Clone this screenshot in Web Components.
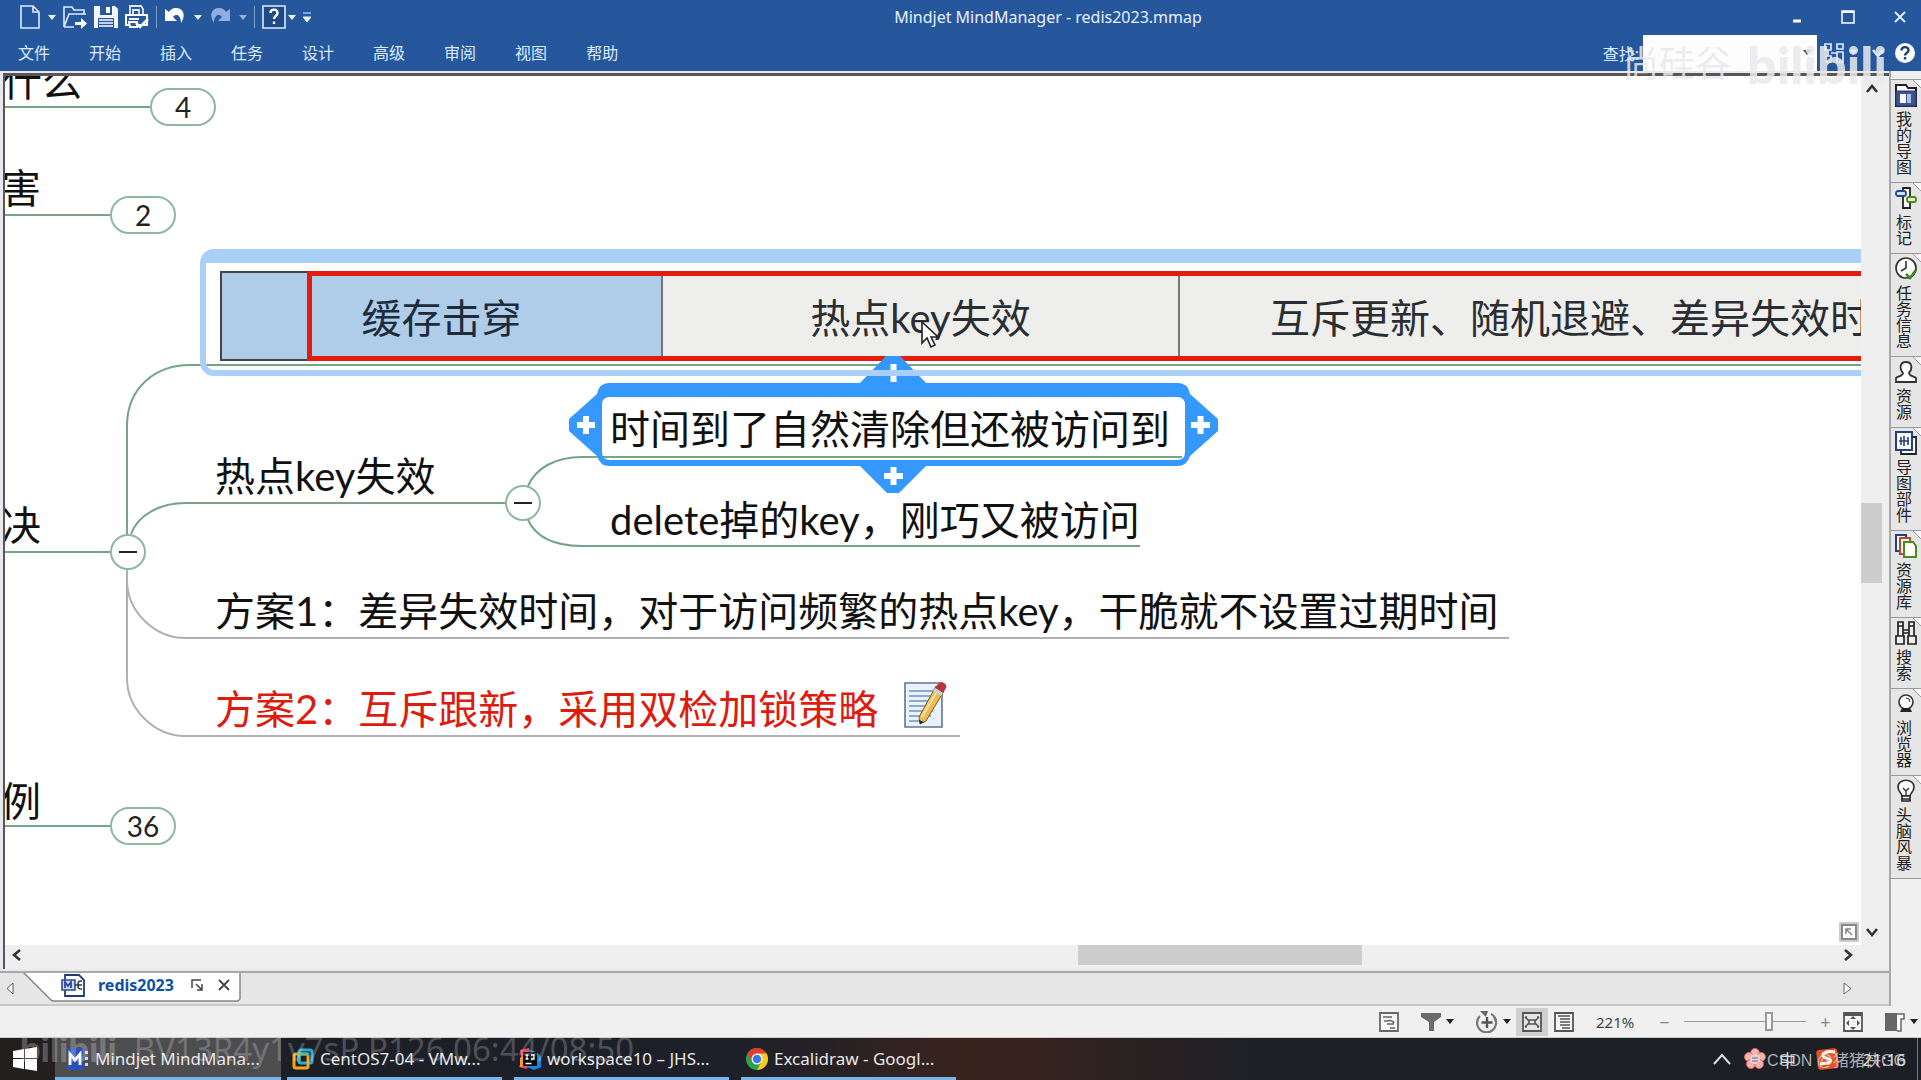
<!DOCTYPE html>
<html lang="zh-CN">
<head>
<meta charset="utf-8">
<title>Mindjet MindManager - redis2023.mmap</title>
<style>
  html, body { margin: 0; height: 100%; overflow: hidden; }
  body { font-family: "Noto Sans", "Noto Sans CJK SC", sans-serif; font-size: 16px; background: #f0f0f0; }
</style>
</head>
<body>
<mind-app></mind-app>
<script>
const BASE = `*{box-sizing:border-box} button,input{font:inherit;color:inherit}
button{appearance:none;border:0;background:none;padding:0;margin:0;display:flex;align-items:center;justify-content:center}`;

function define(name, css, html) {
  const t = document.createElement('template');
  t.innerHTML = `<style>${BASE}${css}</style>${html}`;
  customElements.define(name, class extends HTMLElement {
    constructor() {
      super();
      this.attachShadow({ mode: 'open' }).append(t.content.cloneNode(true));
    }
  });
}

/* name: [width, height, markup] */
const ICONS = {
  file: [20, 24, '<path d="M1 1h12l6 6v16H1z M13 1v6h6" fill="none" stroke="#dcecff" stroke-width="1.6"/>'],
  open: [24, 24, '<path d="M1 22V2h8l2 3h10v4M1 22L6 9h17M1 22h10" fill="none" stroke="#dcecff" stroke-width="1.6"/><path d="M12 17h6v-4l6 5.500l-6 5.500v-4h-6z" fill="#fff"/>'],
  save: [24, 24, '<path d="M0 1h21l3 3v19H0z" fill="#f2f7ff"/><path d="M6 1h12v9H6z" fill="#26579c"/><path d="M12 2h4v6h-4z" fill="#fff"/><path d="M4 13h16v10H4z" fill="#26579c"/><path d="M5 15h14M5 18h14M5 21h14" stroke="#fff" stroke-width="1.600"/>'],
  print: [24, 24, '<path d="M5 10V1h11l2 3v6M8 9V5h6v4" fill="none" stroke="#dcecff" stroke-width="1.800"/><path d="M1 10h21v10H1z" fill="none" stroke="#fff" stroke-width="2"/><path d="M4 14h10M4 17h8v5H5z" stroke="#fff" stroke-width="2" fill="#26579c"/><path d="M11 18l4 4l8-8" stroke="#fff" stroke-width="2.600" fill="none"/>'],
  undo: [22, 20, '<path d="M1 2v12h12L9 10c3-4 8-2 8 6c6-9 1-16-6-15c-3 .5-5 2-6 4z" fill="#fff"/>'],
  redo: [22, 20, '<path d="M21 2v12H9l4-4c-3-4-8-2-8 6c-6-9-1-16 6-15c3 .5 5 2 6 4z" fill="#8fb0df"/>'],
  helpbox: [24, 24, '<path d="M1 1h22v22H1z" fill="#1f4a88" stroke="#dcecff" stroke-width="1.600"/><path d="M8.500 8c0-4.500 7-4.500 7 0c0 3-3.500 3-3.500 6M12 16.500v2.500" fill="none" stroke="#fff" stroke-width="2.400"/>'],
  down: [8, 5, '<path d="M0 0h8L4 5z" fill="currentColor"/>'],
  custom: [8, 11, '<path d="M0 1h8M0 5h8L4 10z" fill="currentColor" stroke="currentColor"/>'],
  min: [10, 14, '<path d="M1 11h8" stroke="#fff" stroke-width="3"/>'],
  max: [14, 14, '<path d="M1 1h12v12H1z" fill="none" stroke="#fff" stroke-width="1.500"/><path d="M1 2h12" stroke="#fff" stroke-width="2"/>'],
  close: [12, 12, '<path d="M1 1l10 10M11 1L1 11" stroke="currentColor" stroke-width="1.800"/>'],
  layout: [22, 20, '<path d="M2 1h6v6H2zM14 1h6v5h-6zM14 9h6v10h-6zM2 13h6v6H2M8 10h6M5 7v6" fill="none" stroke="#dcecff" stroke-width="1.700"/>'],
  chevdown: [14, 10, '<path d="M2 2l5 6l5-6" fill="none" stroke="currentColor" stroke-width="2.600"/>'],
  chevup: [14, 10, '<path d="M2 8l5-6l5 6" fill="none" stroke="currentColor" stroke-width="2.600"/>'],
  chevleft: [10, 12, '<path d="M8 1L2 6l6 5" fill="none" stroke="currentColor" stroke-width="2.600"/>'],
  chevright: [10, 12, '<path d="M2 1l6 5l-6 5" fill="none" stroke="currentColor" stroke-width="2.600"/>'],
  help: [20, 20, '<circle cx="10" cy="10" r="10" fill="#fff"/><path d="M6.500 7.500c0-4.500 7-4.500 7 0c0 2.500-3.500 2.500-3.500 5M10 14v2.500" fill="none" stroke="#1d3f73" stroke-width="2.400"/>'],
  mymaps: [22, 24, '<path d="M1 23V2h10l2 3h8v18z" fill="#fff" stroke="#222" stroke-width="2"/><path d="M1 8h20v15H1z" fill="#3a5296" stroke="#26366d"/><path d="M5 11h6v9H5z" fill="#fff"/><path d="M12 11h4v9h-4z" fill="#b9bfd8"/>'],
  marker: [22, 24, '<path d="M8 2h7v20H8z" fill="#fff" stroke="#222" stroke-width="1.800"/><rect x="1" y="5" width="10" height="5" rx="2" fill="#cfe0ff" stroke="#224a94" stroke-width="1.800"/><rect x="12" y="11" width="9" height="5" rx="2" fill="#e3f3cf" stroke="#4c8a14" stroke-width="1.800"/>'],
  task: [22, 24, '<circle cx="11" cy="11" r="10" fill="#fff" stroke="#333" stroke-width="1.700"/><path d="M11 4v7l-5 3" fill="none" stroke="#333" stroke-width="1.600"/><path d="M11 17l4 4l6-8" fill="none" stroke="#3c8a14" stroke-width="2.600"/>'],
  person: [22, 24, '<path d="M1 22v-4c3-2 7-2 7-5C4 8 5 2 11 2s7 6 3 11c0 3 4 3 7 5v4z" fill="#fff" stroke="#333" stroke-width="1.800"/>'],
  parts: [22, 24, '<path d="M6 6h15v17H6z" fill="#fff" stroke="#222" stroke-width="1.800"/><path d="M1 1h16v18H1z" fill="#fff" stroke="#243f87" stroke-width="2"/><path d="M4 10h10M6 6v8M9 5v10M13 6v8" stroke="#243f87" stroke-width="1.600"/>'],
  library: [22, 24, '<path d="M1 1h10v16H1z" fill="#fff" stroke="#273c84" stroke-width="2"/><path d="M5 4h10v16H5z" fill="#fff" stroke="#c4461a" stroke-width="2"/><path d="M9 8h9l3 4v11H9z" fill="#fff" stroke="#4a8a1c" stroke-width="2"/>'],
  search: [22, 24, '<path d="M3 1h5v4H3zM14 1h5v4h-5zM3 5h5v10H3zM14 5h5v10h-5zM1 15h8v8H1zM13 15h8v8h-8zM8 9h6M8 12h6" fill="#eee" stroke="#222" stroke-width="1.700"/>'],
  browser: [22, 24, '<circle cx="11" cy="10" r="7" fill="#fff" stroke="#333" stroke-width="1.600"/><path d="M11 6a4 4 0 0 1 4 4" fill="none" stroke="#333"/><path d="M7 16h8l2 4H5z" fill="#222"/>'],
  bulb: [22, 24, '<path d="M7 17c0-3-4-4-4-9c0-9 16-9 16 0c0 5-4 6-4 9z" fill="#fff" stroke="#333" stroke-width="1.700"/><path d="M8 9l3 3l3-3M11 12v5" fill="none" stroke="#333" stroke-width="1.400"/><path d="M7 17h8v5H7zM7 20h8" fill="#fff" stroke="#222" stroke-width="1.600"/>'],
  fitcorner: [22, 22, '<path d="M1 1h20v20H1z" fill="#ccc"/><path d="M4 4h14v14H4z" fill="#fff" stroke="#888" stroke-width="2"/><path d="M14 14L8 8M8 13V8h5" stroke="#888" stroke-width="1.600" fill="none"/>'],
  mmdoc: [24, 24, '<path d="M4 2h14l5 5v16H4z" fill="#fff" stroke="#1f3b7a" stroke-width="1.800"/><path d="M1 7h13v10H1z" fill="#cdd8f2" stroke="#2c4a95" stroke-width="1.600"/><path d="M4 15V9l3 4l3-4v6" fill="none" stroke="#2c4a95" stroke-width="1.800"/><path d="M14 12h3M21 8c-4 0-4 1-4 4s0 4 4 4M17 12h4" fill="none" stroke="#333" stroke-width="1.600"/>'],
  pop: [12, 12, '<path d="M1 9V1h9M5 5l6 6M11 5v6H6" fill="none" stroke="#444" stroke-width="1.500"/>'],
  triLeft: [8, 13, '<path d="M7 1v11L1 6.500z" fill="#fff" stroke="#555"/>'],
  triRight: [9, 13, '<path d="M1 1v11l7-5.500z" fill="#fff" stroke="#666"/>'],
  outline: [20, 20, '<path d="M1 1h18v18H1z" fill="#f6f6f6" stroke="#666" stroke-width="1.800"/><path d="M4 5h9M5 9h3c3-1 6 0 7 2M8 12h7M11 16h5" fill="none" stroke="#666" stroke-width="1.700"/>'],
  filter: [20, 20, '<path d="M0 1h20v4l-7 5v9H8v-9L0 5z" fill="#6b6b6b"/>'],
  target: [22, 22, '<path d="M4 5a9.500 9.500 0 1 0 14 1" fill="none" stroke="#777" stroke-width="2.200"/><path d="M4 0h8l-2 6z" fill="#666"/><path d="M15 3a9 9 0 0 1 5 8" fill="none" stroke="#777" stroke-width="2"/><path d="M11 6v11M5.500 11.500h11" stroke="#555" stroke-width="2.400"/>'],
  mapview: [20, 20, '<path d="M1 1h18v18H1z" fill="#e4e4e4" stroke="#555" stroke-width="1.800"/><path d="M7 8h6v4H7zM3 5l4 4M3 15l4-4M17 5l-4 4M17 15l-4-4M3 5h2M3 15h2M15 5h2M15 15h2" fill="none" stroke="#555" stroke-width="1.600"/>'],
  listview: [20, 20, '<path d="M1 1h18v18H1z" fill="#f6f6f6" stroke="#555" stroke-width="1.800"/><path d="M4 4h12M6 7h10M6 10h10M6 13h10M8 16h8" stroke="#555" stroke-width="1.500"/>'],
  fit: [20, 20, '<path d="M1 1h18v18H1z" fill="#f6f6f6" stroke="#555" stroke-width="1.800"/><path d="M1 3h18" stroke="#555" stroke-width="2"/><path d="M10 4l3 3H7zM10 18l3-3H7zM3 11l3-3v6zM17 11l-3-3v6z" fill="#555"/>'],
  panel: [20, 20, '<path d="M0 1h12v18H0z" fill="#666"/><path d="M12 2h7v5h-3v12h-4" fill="#fff" stroke="#666" stroke-width="1.500"/>'],
  windows: [24, 24, '<path d="M0 4l11-2v9H0zM12 2l12-2v11H12zM0 12h11v10L0 20zM12 12h12v12l-12-2z" fill="#fff"/>'],
  mindjet: [22, 22, '<path d="M0 0h17v22H0z" fill="#2b50b8"/><path d="M3 17V6l5 6l5-6v11" fill="none" stroke="#fff" stroke-width="2.800"/><path d="M18 3h3v3h-3zM18 9h3v3h-3zM18 15h3v3h-3z" fill="#c9d8ff"/>'],
  vmware: [22, 22, '<rect x="7" y="2" width="13" height="13" rx="2" fill="none" stroke="#2ba9d6" stroke-width="3"/><rect x="2" y="6" width="14" height="14" rx="2" fill="none" stroke="#f3a71f" stroke-width="3"/><path d="M7 14V6h10" fill="none" stroke="#56b8a0" stroke-width="3"/>'],
  idea: [22, 22, '<path d="M1 2l9-2l3 8l-5 13l-8-2l3-7z" fill="#f0475f"/><path d="M10 2l8 2l4 5v10l-7 3l-7-3z" fill="#1689e6"/><path d="M1 10l4-4l2 12l-6 1z" fill="#f8973a"/><path d="M4 4h14v14H4z" fill="#0a0a0a"/><path d="M6.500 7h3M8 7v4M6.500 11h3M12 7h3v4h-3M6.500 15.500h6" stroke="#fff" stroke-width="1.300" fill="none"/>'],
  chrome: [22, 22, '<circle cx="11" cy="11" r="11" fill="#2da24c"/><path d="M1.500 5.500A11 11 0 0 1 20.500 5.500H11L6 14z" fill="#e33b2e"/><path d="M20.500 5.500A11 11 0 0 1 11 22L16 13L11 5.500z" fill="#fcc91f"/><circle cx="11" cy="11" r="5.500" fill="#fff"/><circle cx="11" cy="11" r="4.300" fill="#3b78e7"/>'],
  trayup: [20, 12, '<path d="M2 11l8-9l8 9" fill="none" stroke="#ddd" stroke-width="2"/>'],
  flower: [22, 22, '<g fill="#f4b3ae" stroke="#d9605c"><circle cx="11" cy="5" r="4.500"/><circle cx="5" cy="9" r="4.500"/><circle cx="17" cy="9" r="4.500"/><circle cx="7" cy="16" r="4.500"/><circle cx="15" cy="16" r="4.500"/></g><circle cx="11" cy="11" r="5" fill="#f7cfc9"/><path d="M8 10h6M8 13h6" stroke="#7b8fc4" stroke-width="1.500"/>'],
  sogou: [24, 24, '<rect x="1" y="2" width="21" height="20" rx="3" fill="#e6541a" transform="rotate(-6 12 12)"/><path d="M19 5C8 3 3 9 10 11s7 5-6 6" fill="none" stroke="#fff" stroke-width="3"/>'],
  note: [44, 48, '<path d="M1 2h37v44H1z" fill="#e9f2fb" stroke="#5f7691" stroke-width="1.600"/><path d="M5 10h29M5 15h29M5 20h27M5 25h25M5 30h24M5 35h22M5 40h14" stroke="#6e93bd" stroke-width="1.600"/><path d="M32 5l8 5l-18 30l-6 3l-1-7z" fill="#e8bd58" stroke="#7d6023"/><path d="M35 7L18 36" stroke="#f8e3a2" stroke-width="2"/><path d="M34 3c3-4 10 0 8 4l-3 5l-8-5z" fill="#b7343c"/><path d="M31 7l8 5l-2 3l-8-5z" fill="#cfcfcf"/><path d="M15 39l1 4l4-2z" fill="#222"/>'],
  cursor: [20, 28, '<path d="M1 1v21l5-5l4 9l4-2l-4-8h7z" fill="#fff" stroke="#222" stroke-width="1.600"/>']
};
customElements.define('ui-icon', class extends HTMLElement {
  constructor() { super(); this.attachShadow({ mode: 'open' }); }
  connectedCallback() {
    const [w, h, body] = ICONS[this.getAttribute('name')];
    this.shadowRoot.innerHTML = `<style>:host{display:block;flex:none}svg{display:block}</style>
      <svg width="${w}" height="${h}" viewBox="0 0 ${w} ${h}" aria-hidden="true">${body}</svg>`;
  }
});

define('title-bar', `
  :host{display:flex;height:34px;align-items:center;color:#e6f0ff;font-size:16px}
  .quick{display:flex;align-items:center;gap:7px;padding-left:20px;width:330px}
  .pair{display:flex;align-items:center;gap:8px}
  .tight{gap:2px}
  i{width:1px;height:22px;background:#7f9fcb}
  .dim{color:#8fb0df}
  .name{flex:1;text-align:center}
  .win{display:flex;width:155px;padding-left:26px;gap:39px;align-items:center}`,
  `<div class="quick">
    <div class="pair"><button aria-label="新建"><ui-icon name="file"></ui-icon></button><ui-icon name="down"></ui-icon></div>
    <button aria-label="打开"><ui-icon name="open"></ui-icon></button>
    <button aria-label="保存"><ui-icon name="save"></ui-icon></button>
    <button aria-label="打印"><ui-icon name="print"></ui-icon></button><i></i>
    <div class="pair"><button aria-label="撤销"><ui-icon name="undo"></ui-icon></button><ui-icon name="down"></ui-icon></div>
    <div class="pair dim"><button aria-label="重做"><ui-icon name="redo"></ui-icon></button><ui-icon name="down"></ui-icon></div><i></i>
    <div class="pair tight"><button aria-label="帮助"><ui-icon name="helpbox"></ui-icon></button><ui-icon name="down"></ui-icon></div>
    <ui-icon name="custom"></ui-icon>
  </div>
  <div class="name">Mindjet MindManager - redis2023.mmap</div>
  <div class="win"><button aria-label="最小化"><ui-icon name="min"></ui-icon></button>
    <button aria-label="最大化"><ui-icon name="max"></ui-icon></button>
    <button aria-label="关闭"><ui-icon name="close"></ui-icon></button></div>`);

define('ribbon-bar', `
  :host{display:flex;height:37px;align-items:center;color:#dcebff}
  nav{display:flex;gap:39px;padding-left:18px;flex:1}
  .find{display:flex;align-items:center;height:36px}
  label{padding-right:4px}
  .box{display:flex;align-items:center;width:174px;height:36px;background:#fdfdfd;color:#444;padding-right:6px}
  input{flex:1;min-width:0;height:100%;border:0;background:none;outline:0}
  .more{display:flex;align-items:center;gap:4px;padding:0 6px}
  .more ui-icon:nth-of-type(2){margin-right:10px}
  .more button{padding-left:6px}`,
  `<nav><slot></slot></nav>
  <div class="find"><label for="q">查找:</label>
    <div class="box"><input id="q" type="text"><ui-icon name="down"></ui-icon></div></div>
  <div class="more"><ui-icon name="layout"></ui-icon><ui-icon name="down"></ui-icon><ui-icon name="chevdown"></ui-icon>
    <button aria-label="帮助"><ui-icon name="help"></ui-icon></button></div>`);

define('menu-item', `:host{display:block} button{line-height:24px}`, `<button><slot></slot></button>`);

define('map-topic', `
  :host{display:block;position:absolute;white-space:nowrap;font:40px/48px Lato,"Noto Sans CJK SC",sans-serif;color:#111}
  :host([red]){color:#dd1c10}`, `<slot></slot>`);

define('map-count', `
  :host{display:block;position:absolute}
  button{width:66px;height:38px;border:2px solid #8db79f;border-radius:19px;background:#fff;color:#222;font:28px/32px Lato,sans-serif}`,
  `<button><slot></slot></button>`);

define('map-fold', `
  :host{display:block;position:absolute}
  button{width:36px;height:36px;border:2px solid #8db79f;border-radius:50%;background:#fff}
  i{width:18px;height:2px;background:#222}`,
  `<button aria-label="折叠"><i></i></button>`);

define('picture-table', `
  :host{display:block;position:absolute}
  table{border-collapse:collapse;table-layout:fixed;width:1740px;height:90px;font:40px/48px Lato,"Noto Sans CJK SC",sans-serif;color:#2a2e33}
  td{border:2px solid #777;padding:4px 0 0;text-align:center;background:#eeeeec;white-space:nowrap}
  td:first-child{background:#afcde9;border-color:#444 #777 #444 #444;color:#1d2c3a}
  td:last-child{text-align:left;padding-left:90px}
  .mark{position:absolute;left:87px;top:0;width:1760px;height:90px;border:5px solid #e51c0c}`,
  `<table><colgroup><col style="width:441px"><col style="width:517px"><col></colgroup>
   <tr><td>缓存击穿</td><td>热点key失效</td><td>互斥更新、随机退避、差异失效时间</td></tr></table>
   <div class="mark"></div>`);

define('mind-canvas', `
  :host{display:block;position:relative;overflow:hidden;background:#fff;min-width:0}
  /* the sheet is scrolled a little past its top left corner */
  .sheet{position:absolute;left:-5px;top:-76px;width:2100px;height:1000px}
  svg{position:absolute;left:0;top:0}
  .hover{position:absolute;left:200px;top:249px;width:1800px;height:127px;border:6px solid #abd0f8;border-top-width:14px;border-radius:14px}
  .at{position:absolute}
  .fit{position:absolute;right:1px;bottom:2px}`,
  `<div class="sheet">
    <svg width="2100" height="1000" fill="none" stroke-width="2">
      <g stroke="#76a489">
        <path d="M0 107H150M0 215H110M0 552H110M0 826H110"/>
        <path d="M127 534V426C127 388 155 365 190 365H2000"/>
        <path d="M131 534C138 515 160 503 185 503H505"/>
        <path d="M528 486C536 468 555 457 582 457H1182M528 520C536 537 555 546 582 546H1140"/>
      </g>
      <g stroke="#b0b0b0">
        <path d="M127 570V580C127 612 155 638 185 638H1509"/>
        <path d="M127 570V678C127 710 155 736 185 736H960"/>
      </g>
    </svg>
    <map-topic style="left:2px;top:57px">什么</map-topic>
    <map-topic style="left:1px;top:164px">害</map-topic>
    <map-topic style="left:1px;top:501px">决</map-topic>
    <map-topic style="left:1px;top:777px">例</map-topic>
    <map-count style="left:150px;top:88px">4</map-count>
    <map-count style="left:110px;top:196px">2</map-count>
    <map-count style="left:110px;top:807px">36</map-count>
    <map-fold style="left:110px;top:534px"></map-fold>
    <map-fold style="left:505px;top:485px"></map-fold>
    <picture-table style="left:220px;top:271px"></picture-table>
    <map-topic style="left:215px;top:452px">热点key失效</map-topic>
    <map-topic style="left:610px;top:496px">delete掉的key，刚巧又被访问</map-topic>
    <map-topic style="left:215px;top:587px">方案1：差异失效时间，对于访问频繁的热点key，干脆就不设置过期时间</map-topic>
    <map-topic red style="left:215px;top:685px">方案2：互斥跟新，采用双检加锁策略</map-topic>
    <ui-icon class="at" name="note" style="left:904px;top:681px"></ui-icon>
    <svg width="1300" height="600">
      <path fill="#3598fd" fill-rule="evenodd" d="M609 383H860L886 356H900L926 383H1178Q1188 383 1190 394L1218 419V431L1190 456Q1187 466 1177 466H926L899 493H887L860 466H609Q600 466 597 456L569 431V419L597 394Q599 383 609 383ZM610 397Q602 397 602 405V452Q602 460 610 460H1177Q1185 460 1185 452V405Q1185 397 1177 397Z"/>
      <path stroke="#fff" stroke-width="6" d="M577 425H595M586 416V434M1191 425H1210M1200.500 416V434M884 476H903M893.500 467V485M893.500 364V382"/>
    </svg>
    <div class="hover"></div>
    <map-topic style="left:610px;top:405px">时间到了自然清除但还被访问到</map-topic>
    <ui-icon class="at" name="cursor" style="left:921px;top:321px"></ui-icon>
  </div>
  <div class="fit"><ui-icon name="fitcorner"></ui-icon></div>`);

define('scroll-bar', `
  :host{display:flex;background:#efefef;color:#333;align-items:center;justify-content:space-between}
  :host([axis=y]){flex-direction:column;width:28px;padding:8px 7px 8px 0}
  :host([axis=x]){height:24px;padding:0 8px 4px 7px}
  .track{flex:1;align-self:stretch;display:flex}
  :host([axis=y]) .track{flex-direction:column}
  .a{flex:var(--before)} .b{flex:var(--after)}
  .thumb{flex:var(--size);background:#cdcdcd}`,
  `<slot name="start"></slot><div class="track"><div class="a"></div><div class="thumb"></div><div class="b"></div></div><slot name="end"></slot>`);

define('side-tab', `
  :host{display:block}
  button{width:31px;border-bottom:1px solid #999;border-right:1px solid #bbb;flex-direction:column;justify-content:flex-start;gap:4px;padding:3px 0 7px;
    background:linear-gradient(225deg,#f8f8f8 5px,#999 5px,#999 6px,#e6e6e6 6px);color:#222}
  span{writing-mode:vertical-rl;font:16px/20px "Noto Sans CJK SC",sans-serif;margin-right:4px}`,
  `<button><slot name="icon"></slot><span><slot></slot></span></button>`);

define('side-panel', `
  :host{display:block;width:32px;border-left:2px solid #a8a8a8;background:#f0f0f0;padding-top:8px}
  div{border-top:1px solid #999}`, `<div><slot></slot></div>`);

define('doc-tabs', `
  :host{display:flex;height:35px;background:#e6e6e6;border-top:2px solid #a8a8a8;border-bottom:2px solid #cacaca;align-items:center;padding:0 37px 0 6px}
  .tab{position:relative;width:218px;height:30px;margin-left:8px;align-self:flex-start}
  .tab svg{position:absolute;left:0;top:0}
  .in{position:relative;display:flex;align-items:center;height:24px;padding-left:39px}
  a{flex:none;margin:0 17px 0 13px;color:#0c51a5;font-weight:700;font-size:16px;line-height:22px;text-decoration:none}
  .x{margin-left:15px;color:#444}
  .gap{flex:1}`,
  `<ui-icon name="triLeft"></ui-icon>
  <div class="tab"><svg width="219" height="30" aria-hidden="true"><path d="M0-2L29 27Q30 28 32 28H216L218 26V-2z" fill="#fff" stroke="#888" stroke-width="1.500"/></svg>
    <div class="in"><ui-icon name="mmdoc"></ui-icon><a href="#redis2023">redis2023</a><ui-icon name="pop"></ui-icon><button class="x" aria-label="关闭"><ui-icon name="close"></ui-icon></button></div></div>
  <div class="gap"></div><ui-icon name="triRight"></ui-icon>`);

define('status-bar', `
  :host{display:flex;height:32px;align-items:center;justify-content:flex-end;background:#f0f0f0;color:#222;padding-right:3px;border-bottom:1px solid #ccc}
  .drop{display:flex;align-items:center;gap:5px;margin-left:22px}
  .on{width:32px;height:28px;background:#cfcfcf;margin:0 6px 0 5px}
  .pct{width:41px;margin:0 22px 0 22px;font-size:15px;color:#444}
  .sign{color:#888;font-size:18px;line-height:20px;width:11px}
  input{appearance:none;width:122px;height:20px;margin:0 14px;background:linear-gradient(#999,#999) center/100% 1px no-repeat}
  input::-webkit-slider-thumb{appearance:none;width:8px;height:19px;background:#f8f8f8;border:2px solid #999}
  .fit{margin-left:12px}`,
  `<button aria-label="大纲"><ui-icon name="outline"></ui-icon></button>
  <div class="drop"><button aria-label="筛选"><ui-icon name="filter"></ui-icon></button><ui-icon name="down"></ui-icon></div>
  <div class="drop"><button aria-label="定位"><ui-icon name="target"></ui-icon></button><ui-icon name="down"></ui-icon></div>
  <button class="on" aria-label="导图视图"><ui-icon name="mapview"></ui-icon></button>
  <button aria-label="大纲视图"><ui-icon name="listview"></ui-icon></button>
  <label class="pct" for="zoom">221%</label>
  <button class="sign" aria-label="缩小">−</button><input id="zoom" type="range" min="0" max="100" value="71"><button class="sign" aria-label="放大">+</button>
  <button class="fit" aria-label="适合窗口"><ui-icon name="fit"></ui-icon></button>
  <div class="drop"><button aria-label="面板"><ui-icon name="panel"></ui-icon></button><ui-icon name="down"></ui-icon></div>`);

define('task-button', `
  :host{display:block;width:215px;flex:none}
  :host([active]){width:226px;background:#4d4d4f}
  :host([active]) button{padding-left:12px}
  button{width:100%;height:42px;justify-content:flex-start;gap:6px;padding:2px 0 0 5px;color:#e8e8e8;border-bottom:3px solid #76b4ec;font-size:17px;white-space:nowrap}`,
  `<button><slot name="icon"></slot><span><slot></slot></span></button>`);

define('task-bar', `
  :host{display:flex;height:42px;color:#e0e0e0;background:linear-gradient(90deg,#231f1e 0,#231f1e 54px,#1d1f27 300px,#1d2029 740px,#38231d 960px,#37231d 1020px,#1d2027 1260px,#1c1f26 100%)}
  .start{width:55px;padding-right:6px}
  .apps{display:flex;gap:12px;flex:1}
  ::slotted([active]){margin-right:-6px}
  .tray{display:flex;align-items:center;gap:12px;padding-right:11px;font-size:17px}
  .ime{width:20px;margin-right:6px;text-align:center}
  .time{margin-left:11px}
  .edge{width:4px;border-left:1px solid #777}`,
  `<button class="start" aria-label="开始"><ui-icon name="windows"></ui-icon></button>
  <div class="apps"><slot></slot></div>
  <div class="tray"><ui-icon name="trayup"></ui-icon><ui-icon name="flower"></ui-icon><span class="ime">中</span><ui-icon name="sogou"></ui-icon><span class="time">21:16</span></div>
  <div class="edge"></div>`);

define('video-mark', `
  :host{display:flex;position:absolute;align-items:center;white-space:nowrap;pointer-events:none;line-height:1}
  ::slotted(b){font-family:Lato,sans-serif;font-weight:900}`, `<slot></slot>`);

define('mind-app', `
  :host{display:flex;flex-direction:column;height:100vh;position:relative;overflow:hidden}
  header{background:#26579c;height:71px}
  .body{flex:1;display:flex;min-height:0}
  .left{flex:1;display:flex;flex-direction:column;min-width:0}
  .pane{flex:1;display:grid;grid-template:minmax(0,1fr) auto / minmax(0,1fr) auto;border:solid #5a5654;border-width:3px 0 0 2px;margin:2px 0 2px 3px;min-height:0;background:#efefef}
  .left{background:#e8e8ee}
  scroll-bar[axis=y]{grid-row:1/3;grid-column:2;margin-bottom:24px}
  scroll-bar[axis=x]{grid-row:2;grid-column:1}
  .m1{right:34px;top:38px;gap:16px;color:rgba(234,234,236,.85);font-size:36px}
  .m1 b{font-size:52px}
  .m2{left:20px;bottom:14px;gap:17px;color:rgba(255,255,255,.22);font-size:33px}
  .m2 b{font-size:36px;color:rgba(225,225,225,.3)}
  .m3{right:15px;bottom:9px;color:rgba(215,215,215,.8);font:16px/20px "Liberation Sans","Noto Sans CJK SC",sans-serif}`,
  `<header><title-bar></title-bar>
    <ribbon-bar><menu-item>文件</menu-item><menu-item>开始</menu-item><menu-item>插入</menu-item><menu-item>任务</menu-item><menu-item>设计</menu-item><menu-item>高级</menu-item><menu-item>审阅</menu-item><menu-item>视图</menu-item><menu-item>帮助</menu-item></ribbon-bar></header>
  <div class="body"><div class="left">
    <div class="pane"><mind-canvas></mind-canvas>
      <scroll-bar axis="y" style="--before:404;--size:79;--after:340"><ui-icon slot="start" name="chevup"></ui-icon><ui-icon slot="end" name="chevdown"></ui-icon></scroll-bar>
      <scroll-bar axis="x" style="--before:1055;--size:284;--after:481"><ui-icon slot="start" name="chevleft"></ui-icon><ui-icon slot="end" name="chevright"></ui-icon></scroll-bar></div>
    <doc-tabs></doc-tabs></div>
    <side-panel>
      <side-tab><ui-icon slot="icon" name="mymaps"></ui-icon>我的导图</side-tab>
      <side-tab><ui-icon slot="icon" name="marker"></ui-icon>标记</side-tab>
      <side-tab><ui-icon slot="icon" name="task"></ui-icon>任务信息</side-tab>
      <side-tab><ui-icon slot="icon" name="person"></ui-icon>资源</side-tab>
      <side-tab><ui-icon slot="icon" name="parts"></ui-icon>导图部件</side-tab>
      <side-tab><ui-icon slot="icon" name="library"></ui-icon>资源库</side-tab>
      <side-tab><ui-icon slot="icon" name="search"></ui-icon>搜索</side-tab>
      <side-tab><ui-icon slot="icon" name="browser"></ui-icon>浏览器</side-tab>
      <side-tab><ui-icon slot="icon" name="bulb"></ui-icon>头脑风暴</side-tab>
    </side-panel></div>
  <status-bar></status-bar>
  <task-bar>
    <task-button active><ui-icon slot="icon" name="mindjet"></ui-icon>Mindjet MindMana...</task-button>
    <task-button><ui-icon slot="icon" name="vmware"></ui-icon>CentOS7-04 - VMw...</task-button>
    <task-button><ui-icon slot="icon" name="idea"></ui-icon>workspace10 – JHS...</task-button>
    <task-button><ui-icon slot="icon" name="chrome"></ui-icon>Excalidraw - Googl...</task-button>
  </task-bar>
  <video-mark class="m1"><span>尚硅谷</span><b>bilibili</b></video-mark>
  <video-mark class="m2"><b>bilibili</b><span>BV13R4y1v7sP P126 06:44/08:50</span></video-mark>
  <video-mark class="m3"><span>CSDN @猪猪侠GG</span></video-mark>`);
</script>
</body>
</html>
